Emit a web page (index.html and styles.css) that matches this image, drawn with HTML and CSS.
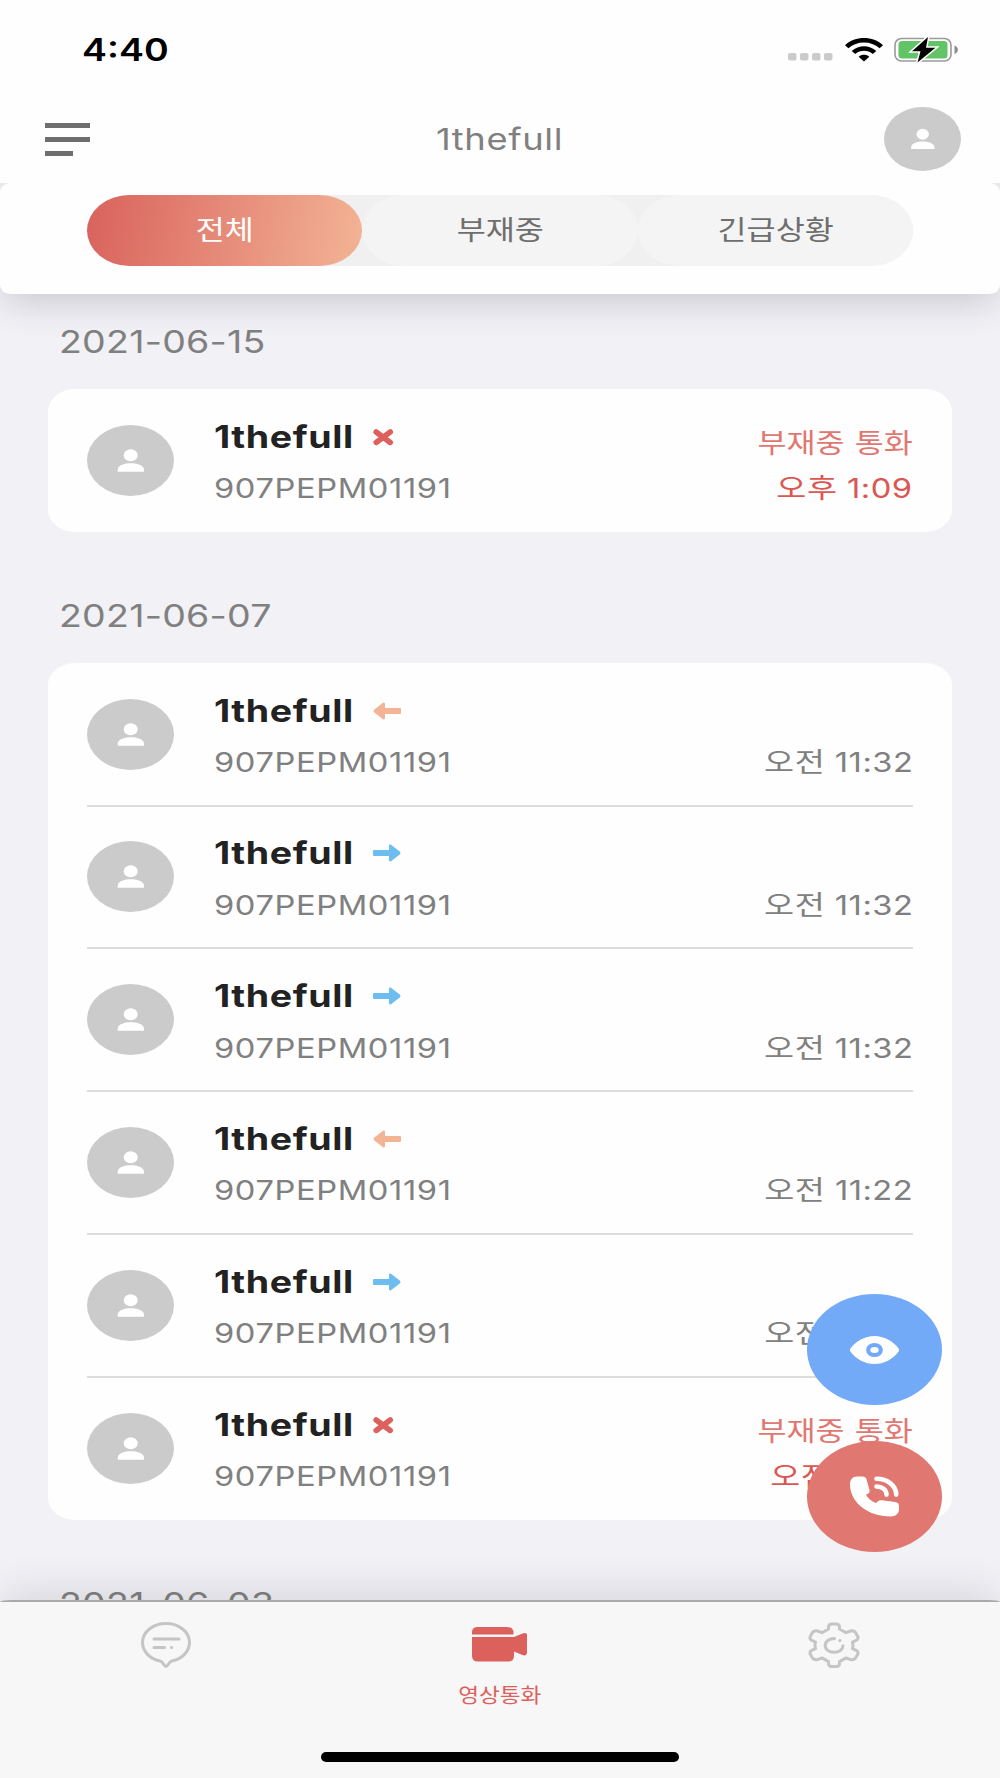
FILE: index.html
```
<!DOCTYPE html>
<html lang="ko">

<head>
    <meta charset="utf-8">
    <meta name="viewport" content="width=device-width, initial-scale=1.0">
    <title>1thefull</title>
    <link rel="stylesheet" href="styles.css">
</head>

<body>
    <!-- shared icons -->
    <svg class="symbols" aria-hidden="true">
        <symbol id="person" viewBox="0 0 87 71" preserveAspectRatio="none">
            <ellipse cx="43.7" cy="30.2" rx="7" ry="6" />
            <path d="M30.7 46.7v-2.2c0-4.4 7.6-6.3 13.1-6.3s13.2 1.9 13.2 6.3v2.2z" />
        </symbol>
        <symbol id="missed" viewBox="0 0 28 18">
            <path d="M3.200 4l14 10.400M17.200 4l-14 10.400" fill="none" stroke="currentColor" stroke-width="5.600" stroke-linecap="round" />
        </symbol>
        <symbol id="outgoing" viewBox="0 0 28 18">
            <path d="M1 6h15V2q0-2 2-1.3l9 7q1 1.300 0 2.600l-9 7q-2 .7-2-1.300v-4H1q-1 0-1-1V7q0-1 1-1z" fill="currentColor" />
        </symbol>
        <symbol id="incoming" viewBox="0 0 28 18">
            <path d="M27 6H12V2q0-2-2-1.3l-9 7q-1 1.300 0 2.600l9 7q2 .7 2-1.300v-4h15q1 0 1-1V7q0-1-1-1z" fill="currentColor" />
        </symbol>
    </svg>

    <header class="header">
        <div class="status-bar">
            <span class="clock wide">4:40</span>
            <div class="status-icons">
                <svg class="signal" viewBox="0 0 45 8">
                    <rect x="0" y="0" width="8.5" height="7.5" rx="2" />
                    <rect x="12" y="0" width="8.5" height="7.5" rx="2" />
                    <rect x="24" y="0" width="8.5" height="7.5" rx="2" />
                    <rect x="36" y="0" width="8.5" height="7.5" rx="2" />
                </svg>
                <svg class="wifi" viewBox="0 0 38 24">
                    <path d="M0 7.2C10-2.4 28-2.4 38 7.2l-3.400 3C26 2.600 12 2.600 3.400 10.200z" />
                    <path d="M6.700 13.100c7-6.400 17.600-6.400 24.600 0l-3.500 2.800c-5-4.300-12.600-4.300-17.600 0z" />
                    <path d="M13.700 18.700c3-2.600 7.600-2.600 10.600 0L19 23.500z" />
                </svg>
                <svg class="battery" viewBox="0 0 65 26">
                    <rect x="1" y="1.500" width="56" height="22.500" rx="6.500" fill="#fff" stroke="#9a9a9a" stroke-width="1.600" />
                    <rect x="4.500" y="4" width="49" height="17.500" rx="3.500" fill="#62c466" />
                    <path d="M60.500 8.500c4.500 1.500 4.500 7 0 8.500z" fill="#8c8c8c" />
                    <path d="M34 0L18 14.300h8.500L23.500 25.500 41.500 10.700H32z" fill="#000" stroke="#fff" stroke-width="3" paint-order="stroke" />
                </svg>
            </div>
        </div>
        <div class="title-bar">
            <div class="menu">
                <span></span>
                <span></span>
                <span class="short"></span>
            </div>
            <h1 class="title wide">1thefull</h1>
            <div class="avatar avatar-small"><svg><use href="#person" /></svg></div>
        </div>
    </header>

    <div class="filter-wrap">
        <div class="filter">
            <div class="tabs">
                <div class="tab active"><span class="wide">전체</span></div>
                <div class="tab"><span class="wide">부재중</span></div>
                <div class="tab"><span class="wide">긴급상황</span></div>
            </div>
        </div>
    </div>

    <main class="history">
        <h2 class="date wide">2021-06-15</h2>
        <div class="card">
            <div class="call">
                <div class="avatar"><svg><use href="#person" /></svg></div>
                <div class="info">
                    <div class="name"><span class="wide">1thefull</span><svg class="mark missed"><use href="#missed" /></svg></div>
                    <div class="serial wide">907PEPM01191</div>
                </div>
                <div class="when missed">
                    <span class="label wide">부재중 통화</span>
                    <span class="time wide">오후 1:09</span>
                </div>
            </div>
        </div>

        <h2 class="date wide">2021-06-07</h2>
        <div class="card">
            <div class="call">
                <div class="avatar"><svg><use href="#person" /></svg></div>
                <div class="info">
                    <div class="name"><span class="wide">1thefull</span><svg class="mark incoming"><use href="#incoming" /></svg></div>
                    <div class="serial wide">907PEPM01191</div>
                </div>
                <div class="when"><span class="time wide">오전 11:32</span></div>
            </div>
            <div class="call">
                <div class="avatar"><svg><use href="#person" /></svg></div>
                <div class="info">
                    <div class="name"><span class="wide">1thefull</span><svg class="mark outgoing"><use href="#outgoing" /></svg></div>
                    <div class="serial wide">907PEPM01191</div>
                </div>
                <div class="when"><span class="time wide">오전 11:32</span></div>
            </div>
            <div class="call">
                <div class="avatar"><svg><use href="#person" /></svg></div>
                <div class="info">
                    <div class="name"><span class="wide">1thefull</span><svg class="mark outgoing"><use href="#outgoing" /></svg></div>
                    <div class="serial wide">907PEPM01191</div>
                </div>
                <div class="when"><span class="time wide">오전 11:32</span></div>
            </div>
            <div class="call">
                <div class="avatar"><svg><use href="#person" /></svg></div>
                <div class="info">
                    <div class="name"><span class="wide">1thefull</span><svg class="mark incoming"><use href="#incoming" /></svg></div>
                    <div class="serial wide">907PEPM01191</div>
                </div>
                <div class="when"><span class="time wide">오전 11:22</span></div>
            </div>
            <div class="call">
                <div class="avatar"><svg><use href="#person" /></svg></div>
                <div class="info">
                    <div class="name"><span class="wide">1thefull</span><svg class="mark outgoing"><use href="#outgoing" /></svg></div>
                    <div class="serial wide">907PEPM01191</div>
                </div>
                <div class="when"><span class="time wide">오전 11:22</span></div>
            </div>
            <div class="call">
                <div class="avatar"><svg><use href="#person" /></svg></div>
                <div class="info">
                    <div class="name"><span class="wide">1thefull</span><svg class="mark missed"><use href="#missed" /></svg></div>
                    <div class="serial wide">907PEPM01191</div>
                </div>
                <div class="when missed">
                    <span class="label wide">부재중 통화</span>
                    <span class="time wide">오전 11:21</span>
                </div>
            </div>
        </div>

        <h2 class="date wide">2021-06-03</h2>
    </main>

    <div class="actions">
        <div class="fab fab-view">
            <svg viewBox="0 0 49 28">
                <path fill="#fff" d="M.4 12.600C6 5 15 0 24.500 0S43 5 48.600 12.600q.8 1.400 0 2.800C43 23 34 28 24.500 28S6 23 .4 15.400q-.8-1.400 0-2.800z" />
                <ellipse cx="24.500" cy="14" rx="6.300" ry="5" fill="none" stroke="#73aaf7" stroke-width="4.200" />
            </svg>
        </div>
        <div class="fab fab-call">
            <svg viewBox="0 0 49 41">
                <path fill="#fff" d="M7 .6h5c2.500 0 4 .8 4.600 3l3 10.800c.5 2-1.200 3.400-3.600 4 1.800 4 5.800 7.200 10.500 8.700 1.300-2.300 2.700-3.200 5.300-2.800l13.400 1.800c2.700.4 3.800 1.700 3.800 4v3.500c0 4.200-3.500 7-8.500 7C18 40.600 0 26.500 0 8.600 0 3.600 2.500.6 7 .6z" />
                <path fill="none" stroke="#fff" stroke-width="4.600" stroke-linecap="round" d="M26.500 2.800c11 0 19.700 7 19.700 15.800M26.500 10.500c5.600 0 10 3.500 10 8.100" />
            </svg>
        </div>
    </div>

    <nav class="tab-bar">
        <div class="tab-items">
            <div class="tab-item">
                <svg class="icon-chat" viewBox="0 0 50 46">
                    <path d="M25 1.500C12 1.500 1.500 9.800 1.500 20.500c0 9 7.500 16.400 17.500 18.500 3.500.8 4 5.500 6 5.500s2.500-4.700 6-5.500c10-2.100 17.500-9.500 17.500-18.500C48.500 9.800 38 1.500 25 1.500z" />
                    <path d="M13 17h25M13 25.500h10.500M30.500 25.500h.2" />
                </svg>
            </div>
            <div class="tab-item selected">
                <svg class="icon-video" viewBox="0 0 55 35">
                    <path d="M0 7.500V5q0-5 6-5h28.500q6 0 7 4.500v3z" />
                    <path d="M0 10h42l8.500-3.500Q55 5 55 8v17q0 4.500-4.500 3L42 24.500V29q0 5.500-6 5.500H6q-6 0-6-5.500z" />
                </svg>
                <span class="wide">영상통화</span>
            </div>
            <div class="tab-item">
                <svg class="icon-gear" viewBox="0 0 52 46">
                    <path d="M20.500 5Q20.500 2 24 2H28Q31.500 2 31.500 5V7L38 10.700L42.500 9Q46 8 48 11.300L49.800 14.600Q50.700 17 48.200 18.300L44.500 20Q45.500 23.300 44.500 26.600L48.200 28.300Q50.700 29.600 49.800 32L48 35.300Q46 38.600 42.500 37.600L38 35.900L31.500 39.600V41.600Q31.500 44.600 28 44.600H24Q20.500 44.600 20.500 41.600V39.600L14 35.900L9.500 37.600Q6 38.600 4 35.300L2.200 32Q1.300 29.600 3.800 28.300L7.500 26.600Q6.500 23.300 7.500 20L3.800 18.300Q1.300 17 2.200 14.600L4 11.300Q6 8 9.500 9L14 10.700L20.500 7Z" />
                    <path d="M26.500 16.600c-5.500 0-9.300 2.800-9.300 6.800s3.900 6.900 9 6.900c5 0 8.600-2.800 8.800-6.500M31.800 18.400h.2" />
                </svg>
            </div>
        </div>
        <div class="home-indicator"></div>
    </nav>
</body>

</html>
```
FILE: styles.css
```
* {
    margin: 0;
    padding: 0;
    box-sizing: border-box;
}

body {
    font-family: Inter, 'Noto Sans CJK KR', sans-serif;
    width: 1000px;
    height: 1778px;
    overflow: hidden;
    display: flex;
    flex-direction: column;
    background: #f1f1f6;
    color: #808080;
    position: relative;
}

svg {
    display: block;
}

.symbols {
    position: absolute;
    width: 0;
    height: 0;
}

.wide {
    display: inline-block;
    white-space: nowrap;
    transform: scaleX(1.21);
    transform-origin: left center;
}

/* header */
.header {
    height: 183px;
    background: #fefefe;
}

.status-bar {
    height: 98px;
    padding: 1px 41px 0 82px;
    display: flex;
    justify-content: space-between;
    align-items: center;
}

.clock {
    font-size: 31px;
    font-weight: 600;
    line-height: 36px;
    color: #000;
}

.status-icons {
    display: flex;
    align-items: center;
}

.signal {
    width: 45px;
    height: 8px;
    fill: #cbcbcb;
    margin: 15px 12px 0 0;
}

.wifi {
    width: 38px;
    height: 24px;
    margin-right: 11px;
}

.battery {
    width: 65px;
    height: 26px;
}

.title-bar {
    height: 82px;
    padding: 0 39px;
    display: flex;
    align-items: center;
    justify-content: space-between;
}

.menu {
    width: 77px;
    padding-left: 6px;
    display: flex;
    flex-direction: column;
    gap: 9px;
}

.menu span {
    width: 45px;
    height: 5px;
    background: #6e6e6e;
}

.menu .short {
    width: 28px;
}

.title {
    font-size: 30px;
    font-weight: 400;
    line-height: 36px;
    letter-spacing: 0.5px;
    transform-origin: center;
}

.avatar {
    width: 87px;
    height: 71px;
    border-radius: 50%;
    background: #cbcbcb;
    fill: #fff;
    flex: none;
}

.avatar svg {
    width: 100%;
    height: 100%;
}

.avatar-small {
    width: 77px;
    height: 64px;
}

/* filter */
.filter-wrap {
    background: linear-gradient(#ededed 50%, transparent 50%);
    position: relative;
    z-index: 1;
}

.filter {
    height: 111px;
    padding: 12px 87px 0;
    background: #fefefe;
    border-radius: 10px / 9px;
    box-shadow: 0 12px 36px -4px rgba(40, 40, 50, 0.2);
    clip-path: inset(0 0 -80px 0);
}

.tabs {
    display: flex;
    height: 71px;
    background: #f0f0f0;
    border-radius: 43px / 36px;
}

.tab {
    flex: 1;
    display: flex;
    align-items: center;
    justify-content: center;
    border-radius: 43px / 36px;
    background: #f4f4f4;
    color: #6e6e6e;
    font-size: 27px;
    line-height: 36px;
}

.tab .wide {
    transform: scaleX(1.17);
    transform-origin: center;
}

.tab.active {
    background: linear-gradient(100deg, #d9625d, #f3b495);
    color: #fff;
}

/* history */
.history {
    flex: 1;
    min-height: 0;
    overflow: hidden;
    padding: 0 48px;
    display: flex;
    flex-direction: column;
    align-items: flex-start;
}

.date {
    flex: none;
    height: 36px;
    margin: 30px 0 29px 11px;
    font-size: 31px;
    font-weight: 400;
    line-height: 36px;
    letter-spacing: 0.2px;
}

.card {
    flex: none;
    width: 904px;
    background: #fefefe;
    border-radius: 27px / 22px;
    margin-bottom: 36px;
}

.call {
    height: 142.8px;
    margin: 0 39px;
    padding-bottom: 24.5px;
    display: flex;
    align-items: flex-end;
    position: relative;
}

/* hairline between two calls */
.call + .call::before {
    content: '';
    position: absolute;
    top: -1px;
    left: 0;
    right: 0;
    height: 2px;
    background: #dcdcdc;
}

.call .avatar {
    margin-bottom: 11.5px;
}

.info {
    flex: 1;
    margin-left: 39.5px;
}

.name {
    display: flex;
    align-items: center;
    height: 36px;
    margin-bottom: 16.5px;
    font-size: 31px;
    font-weight: 700;
    line-height: 36px;
    letter-spacing: 0.5px;
    color: #222;
}

.name .wide {
    width: 159.5px;
}

.mark {
    width: 28px;
    height: 18px;
}

.mark.missed {
    color: #dc605c;
}

.mark.incoming {
    color: #f3b495;
}

.mark.outgoing {
    color: #6dbdf0;
}

.serial {
    font-size: 27px;
    line-height: 36px;
    height: 36px;
    letter-spacing: 0.5px;
    display: block;
    width: 200px;
}

.when {
    display: flex;
    flex-direction: column;
    align-items: flex-end;
    gap: 9px;
    font-size: 27px;
    line-height: 36px;
}

.when .wide {
    transform-origin: right center;
}

.when .time {
    letter-spacing: 0.4px;
}

.when.missed .label {
    color: #e07871;
    word-spacing: 1px;
    transform: scaleX(1.17);
}

.when.missed .time {
    color: #db5752;
}

/* floating buttons */
.actions {
    position: absolute;
    right: 58px;
    bottom: 226px;
    display: flex;
    flex-direction: column;
    gap: 36px;
}

.fab {
    width: 135px;
    height: 111px;
    border-radius: 50%;
    display: flex;
    align-items: center;
    justify-content: center;
}

.fab svg {
    width: 49px;
}

.fab-view {
    background: #73aaf7;
}

.fab-call {
    background: #e07871;
}

/* bottom tab bar */
.tab-bar {
    flex: none;
    height: 178px;
    position: relative;
    background: #f7f7f7;
    border-top: 2px solid #aaa;
    border-radius: 12px 12px 0 0 / 2px 2px 0 0;
    box-shadow: 0 -10px 40px -4px rgba(40, 40, 50, 0.14);
}

.tab-items {
    height: 150px;
    display: flex;
}

.tab-item {
    width: 331px;
    padding-top: 20px;
    display: flex;
    flex-direction: column;
    align-items: center;
    fill: none;
    stroke: #c5c5c5;
    stroke-width: 3px;
    stroke-linecap: round;
    stroke-linejoin: round;
}

.tab-item.selected {
    padding-top: 25px;
    width: 337px;
    fill: #dc605c;
    stroke: none;
    color: #dc605c;
    font-size: 20px;
    line-height: 30px;
}

.selected .wide {
    margin-top: 19px;
    transform: scaleX(1.13);
    transform-origin: center;
}

.icon-chat {
    width: 50px;
    height: 46px;
}

.icon-video {
    width: 55px;
    height: 35px;
}

.icon-gear {
    width: 52px;
    height: 46px;
}

.home-indicator {
    width: 358px;
    height: 10px;
    margin: 0 auto;
    border-radius: 5px;
    background: #000;
}
```
